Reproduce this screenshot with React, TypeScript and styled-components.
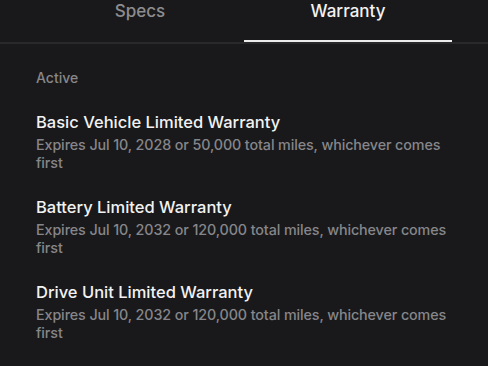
import React from "react";
import styled, { createGlobalStyle } from "styled-components";

const Global = createGlobalStyle`
  html, body { margin: 0; padding: 0; background: #19191b; }
  body { font-family: Inter, "Liberation Sans", sans-serif; -webkit-font-smoothing: antialiased; }
`;

const Page = styled.div`
  width: 488px;
  height: 366px;
  overflow: hidden;
  background: #19191b;
`;

const TabBar = styled.div`
  display: flex;
  padding: 0 36px;
  border-bottom: 2px solid #29292c;
`;

const Tab = styled.div<{ $active?: boolean }>`
  flex: 1;
  height: 43px;
  box-sizing: border-box;
  text-align: center;
  font-size: 17px;
  font-weight: 500;
  line-height: 24px;
  margin-top: -1px;
  color: ${(p) => (p.$active ? "#f2f2f2" : "#8d8d90")};
  border-bottom: 2px solid ${(p) => (p.$active ? "#ececec" : "transparent")};
`;

const Content = styled.div`
  padding: 25px 36px 0 36px;
  display: flex;
  flex-direction: column;
`;

const SectionLabel = styled.div`
  font-size: 14px;
  font-weight: 500;
  line-height: 18px;
  color: #87878a;
  margin-bottom: 25px;
`;

const Item = styled.div`
  display: flex;
  flex-direction: column;
  margin-bottom: 25px;
`;

const Title = styled.div`
  font-size: 16.5px;
  font-weight: 500;
  line-height: 20px;
  color: #f2f2f2;
  margin-bottom: 4px;
`;

const Sub = styled.div`
  font-size: 14.3px;
  font-weight: 500;
  line-height: 18px;
  letter-spacing: -0.1px;
  color: #86868a;
`;

const items = [
  { title: "Basic Vehicle Limited Warranty", sub: "Expires Jul 10, 2028 or 50,000 total miles, whichever comes first" },
  { title: "Battery Limited Warranty", sub: "Expires Jul 10, 2032 or 120,000 total miles, whichever comes first" },
  { title: "Drive Unit Limited Warranty", sub: "Expires Jul 10, 2032 or 120,000 total miles, whichever comes first" },
];

export default function App() {
  return (
    <Page>
      <Global />
      <TabBar>
        <Tab>Specs</Tab>
        <Tab $active>Warranty</Tab>
      </TabBar>
      <Content>
        <SectionLabel>Active</SectionLabel>
        {items.map((it) => (
          <Item key={it.title}>
            <Title>{it.title}</Title>
            <Sub>{it.sub}</Sub>
          </Item>
        ))}
      </Content>
    </Page>
  );
}
